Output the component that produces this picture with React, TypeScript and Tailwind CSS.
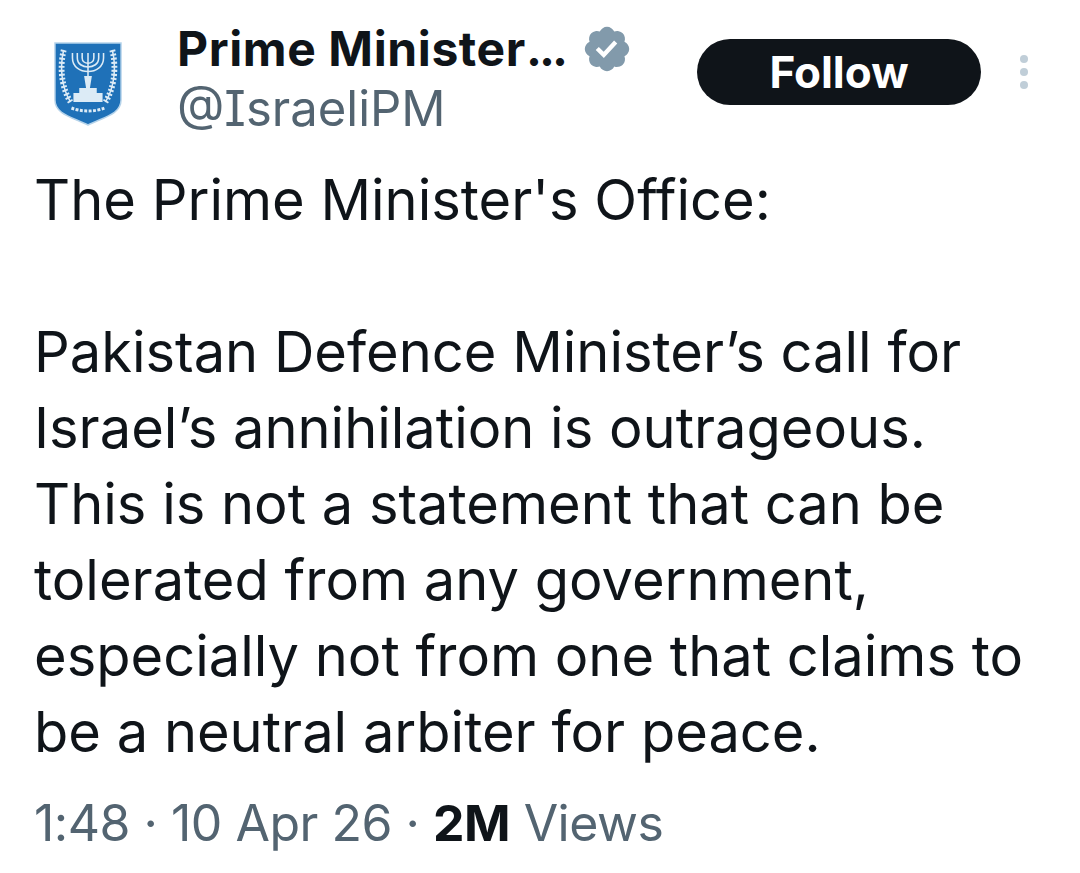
import React from 'react'

const Emblem = () => (
  <svg width="68" height="84" viewBox="0 0 70 84" preserveAspectRatio="none" className="shrink-0">
    <path d="M1 1H69V58C69 72 52 75 35 83C18 75 1 72 1 58Z" fill="#1f71b8" stroke="#b5d3ea" strokeWidth="1.5" />
    <g fill="none" stroke="#dcebf6" strokeWidth="1.6">
      <path d="M35 11V45" />
      <path d="M29 11V16C29 23 41 23 41 16V11" />
      <path d="M24 11V16C24 28 46 28 46 16V11" />
      <path d="M19 11V16C19 34 51 34 51 16V11" />
      <path d="M10 8C6 24 7 44 17 60M60 8C64 24 63 44 53 60" />
      <path d="M10 8C6 24 7 44 17 60M60 8C64 24 63 44 53 60" strokeDasharray="2 2" strokeWidth="6" />
    </g>
    <path d="M31 34H39L37 46H33ZM26 46H44V51H50V60H20V51H26Z" fill="#dcebf6" />
    <path d="M18 66C28 70 42 70 52 66" fill="none" stroke="#dcebf6" strokeWidth="3" strokeDasharray="3 1.5" />
  </svg>
)

const Badge = () => (
  <svg width="52" height="52" viewBox="0 0 22 22">
    <path
      fill="#829AAB"
      d="M20.396 11c-.018-.646-.215-1.275-.57-1.816-.354-.54-.852-.972-1.438-1.246.223-.607.27-1.264.14-1.897-.131-.634-.437-1.218-.882-1.687-.47-.445-1.053-.75-1.687-.882-.633-.13-1.29-.083-1.897.14-.273-.587-.704-1.086-1.245-1.44S11.647 1.62 11 1.604c-.646.017-1.273.213-1.813.568s-.969.854-1.24 1.44c-.608-.223-1.267-.272-1.902-.14-.635.13-1.22.436-1.69.882-.445.47-.749 1.055-.878 1.688-.13.633-.08 1.29.144 1.896-.587.274-1.087.705-1.443 1.245-.356.54-.555 1.17-.574 1.817.02.647.218 1.276.574 1.817.356.54.856.972 1.443 1.245-.224.606-.274 1.263-.144 1.896.13.634.433 1.218.877 1.688.47.443 1.054.747 1.687.878.633.132 1.29.084 1.897-.136.274.586.705 1.084 1.246 1.439.54.354 1.17.551 1.816.569.647-.016 1.276-.213 1.817-.567s.972-.854 1.245-1.44c.604.239 1.266.296 1.903.164.636-.132 1.22-.447 1.68-.907.46-.46.776-1.044.908-1.681s.075-1.299-.165-1.903c.586-.274 1.084-.705 1.439-1.246.354-.54.551-1.17.569-1.816z"
    />
    <path fill="#fff" d="M9.662 14.85l-3.429-3.428 1.293-1.302 2.072 2.072 4.4-4.794 1.347 1.246z" />
  </svg>
)

const App = () => {
  return (
    <div className="min-h-[873px] w-[1080px] bg-white font-['Inter',sans-serif] text-[#0f1419]">
      <header className="flex items-start pt-[21px] pl-[54px] pr-[48px]">
        <div className="mt-[21px] mr-[55px]">
          <Emblem />
        </div>
        <div className="w-[520px]">
          <div className="flex h-[56px] items-center">
            <span className="text-[48px] leading-[56px] font-bold tracking-[0.6px]">
              Prime Minister<span className="tracking-[-3px]">...</span>
            </span>
            <span className="-mt-[1px] ml-[16px]"><Badge /></span>
          </div>
          <div className="mt-[4px] text-[49px] leading-[56px] text-[#536471] [font-feature-settings:'cv08']">@IsraeliPM</div>
        </div>
        <button className="mt-[18px] flex h-[66px] w-[284px] items-center justify-center rounded-full bg-[#0f1419] text-[44px] font-bold text-white">
          Follow
        </button>
        <div className="mt-[34px] ml-[39px] flex flex-col gap-[5px]">
          <span className="size-[8px] rounded-full bg-[#c0ced8]" />
          <span className="size-[8px] rounded-full bg-[#c0ced8]" />
          <span className="size-[8px] rounded-full bg-[#c0ced8]" />
        </div>
      </header>
      <main className="mt-[25px] px-[34px] text-[56px] leading-[76px]">
        <p>The Prime Minister's Office:</p>
        <p className="mt-[76px]">
          Pakistan Defence Minister’s call for
          <br />
          Israel’s annihilation is outrageous.
          <br />
          This is not a statement that can be
          <br />
          tolerated from any government,
          <br />
          especially not from one that claims to
          <br />
          be a neutral arbiter for peace.
        </p>
      </main>
      <footer className="mt-[23px] px-[34px] text-[50px] leading-[60px] tracking-[-0.5px] text-[#536471]">
        1:48 · 10 Apr 26 · <span className="font-bold text-[#0f1419]">2M</span> Views
      </footer>
    </div>
  )
}

export default App
